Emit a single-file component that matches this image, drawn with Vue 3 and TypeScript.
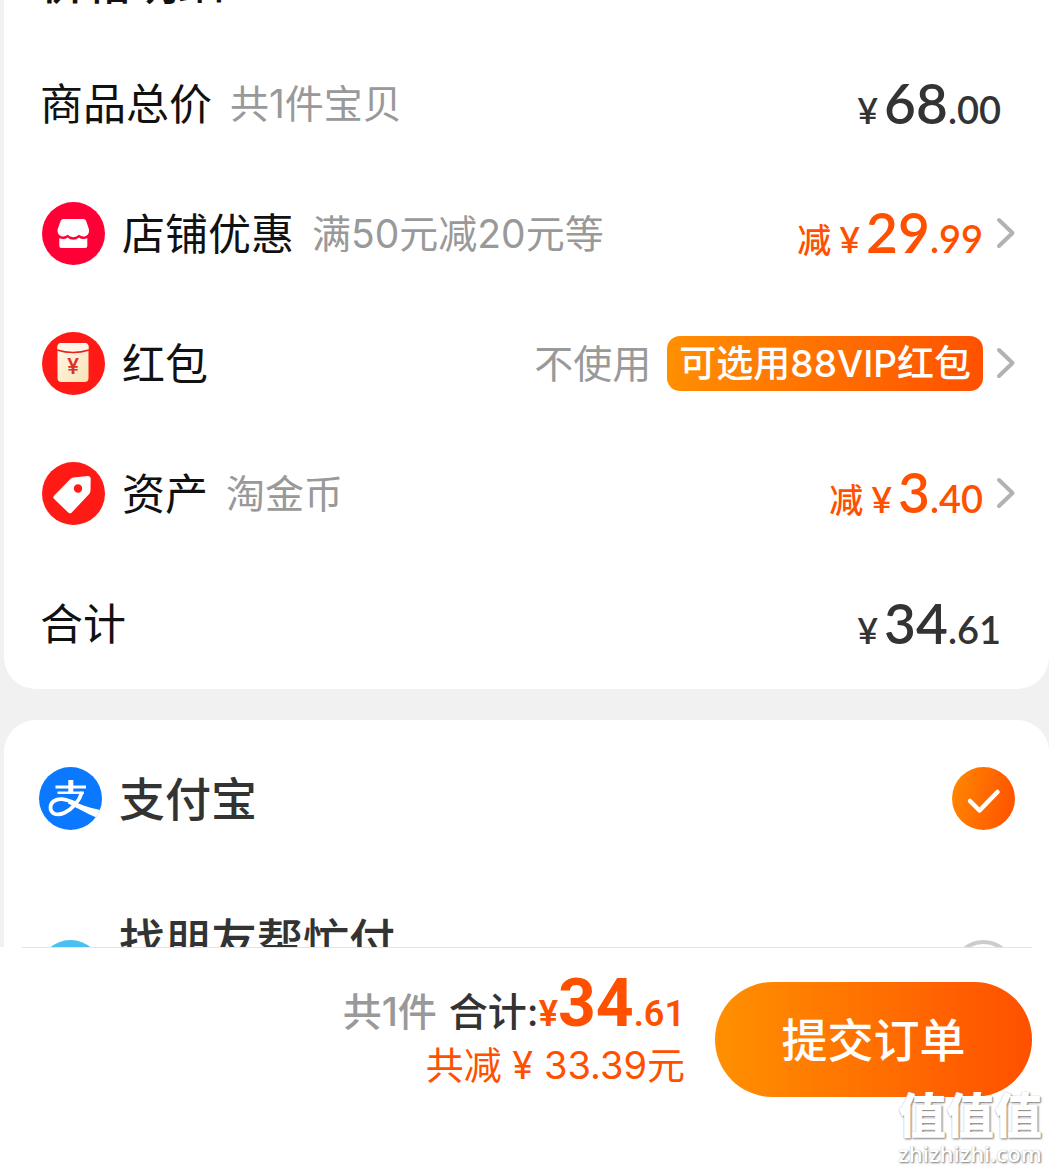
<script setup lang="ts">
import { ref } from 'vue'

interface PriceRow {
  id: string
  label: string
  icon?: 'shop' | 'packet' | 'tag'
  note?: string
  prefix?: string
  amount?: [string, string]
  hint?: string
  badge?: string
  link?: boolean
}

const rows: PriceRow[] = [
  { id: 'goods', label: '商品总价', note: '共1件宝贝', amount: ['68', '.00'] },
  { id: 'shop', label: '店铺优惠', icon: 'shop', note: '满50元减20元等', prefix: '减', amount: ['29', '.99'], link: true },
  { id: 'packet', label: '红包', icon: 'packet', hint: '不使用', badge: '可选用88VIP红包', link: true },
  { id: 'asset', label: '资产', icon: 'tag', note: '淘金币', prefix: '减', amount: ['3', '.40'], link: true },
  { id: 'total', label: '合计', amount: ['34', '.61'] },
]

const payment = ref('alipay')
</script>

<template>
  <div class="page">
    <main class="content">
      <section class="card prices">
        <h2 class="heading">价格明细</h2>
        <component
          :is="row.link ? 'button' : 'div'"
          v-for="row in rows"
          :key="row.id"
          class="row"
          :class="{ linked: row.link }"
          :type="row.link ? 'button' : undefined"
        >
          <svg v-if="row.icon === 'shop'" class="icon" viewBox="0 0 63 63" aria-hidden="true">
            <circle cx="31.5" cy="31.5" r="31.5" fill="#ff0036" />
            <path fill="#fff" d="M21.5 17H41.5Q43.3 17 44 18.6L47 27.5Q47.6 33.4 42.6 34.4Q39.3 34.9 37 32.8Q34.6 35.2 31.3 35.2Q28 35.2 25.6 32.8Q23.3 34.9 20 34.4Q15 33.4 15.6 27.5L18.8 18.6Q19.6 17 21.5 17Z" />
            <path fill="#fff" d="M17.3 36.3Q22.5 38.2 25.6 35.6Q28 37.8 31.3 37.8Q34.6 37.8 37 35.6Q40 38.2 45.3 36.3V44Q45.3 46 43.3 46H19.3Q17.3 46 17.3 44Z" />
          </svg>
          <svg v-else-if="row.icon === 'packet'" class="icon" viewBox="0 0 63 63" aria-hidden="true">
            <defs>
              <linearGradient id="paper" x1="0" y1="0" x2="1" y2="1">
                <stop offset="0" stop-color="#fff8ea" />
                <stop offset="1" stop-color="#f9e3b4" />
              </linearGradient>
            </defs>
            <circle cx="31.5" cy="31.5" r="31.5" fill="#ff1a16" />
            <rect x="15.5" y="11" width="31" height="39" rx="4" fill="url(#paper)" />
            <path d="M15.5 18Q31 22.5 46.5 18V15Q46.5 11 42.5 11H19.5Q15.5 11 15.5 15Z" fill="#fff6ea" />
            <path d="M15 18Q31 23 47 18" fill="none" stroke="#e8231c" stroke-width="1.5" />
            <text x="31" y="42" text-anchor="middle" class="yen">¥</text>
          </svg>
          <svg v-else-if="row.icon === 'tag'" class="icon" viewBox="0 0 63 63" aria-hidden="true">
            <circle cx="31.5" cy="31.5" r="31.5" fill="#ff1a16" />
            <path fill="#fff" fill-rule="evenodd" d="M31.5 15.5L46 14Q48.6 13.9 48.7 16.5L48.5 28.5Q48.5 30.5 47.2 31.9L29.8 50.5Q28 52.2 26.2 50.5L12.2 37Q10.5 35.2 12.2 33.4L28.2 17.2Q29.6 15.8 31.5 15.5ZM36 22.3A4.2 4.2 0 1 0 36 30.7A4.2 4.2 0 1 0 36 22.3Z" />
          </svg>
          <span class="label">{{ row.label }}</span>
          <span v-if="row.note" class="note">{{ row.note }}</span>
          <span class="value">
            <span v-if="row.amount" class="amount">
              <span v-if="row.prefix" class="prefix">{{ row.prefix }}</span>
              <span class="currency">¥</span>
              <span class="figure"><span class="whole">{{ row.amount[0] }}</span>{{ row.amount[1] }}</span>
            </span>
            <span v-if="row.hint" class="hint">{{ row.hint }}</span>
            <span v-if="row.badge" class="badge">{{ row.badge }}</span>
            <svg v-if="row.link" class="chevron" viewBox="0 0 20 32" aria-hidden="true">
              <path d="M3 3L16.5 16L3 29" fill="none" stroke="#b2b2b2" stroke-width="4" stroke-linecap="round" stroke-linejoin="round" />
            </svg>
          </span>
        </component>
      </section>

      <section class="card payments">
        <label class="pay">
          <svg class="icon" viewBox="0 0 63 63" aria-hidden="true">
            <defs>
              <clipPath id="disc"><circle cx="31.5" cy="31.5" r="31.5" /></clipPath>
            </defs>
            <circle cx="31.5" cy="31.5" r="31.5" fill="#0a78ff" />
            <g clip-path="url(#disc)" fill="none" stroke="#fff">
              <path d="M31.8 13V25" stroke-width="5" />
              <path d="M16.5 20H47" stroke-width="2.8" />
              <path d="M18.5 25.7H45" stroke-width="2.6" />
              <path d="M43 25C40.5 34 33.5 42 25.5 45.8C17.5 49.5 11.5 46.5 11.5 40.5C11.5 35 16.5 31.8 23 32.2C28 32.6 33 34.8 38 37" stroke-width="3.8" />
              <path d="M30 32.6C40 37 48 40.5 62 43.2L57.5 50.5C48 46.5 40 42 29 36.5Z" fill="#fff" stroke="none" />
            </g>
          </svg>
          <span class="pay-name">支付宝</span>
          <span class="pick">
            <input v-model="payment" class="radio" type="radio" name="payment" value="alipay" />
            <svg v-if="payment === 'alipay'" class="tick" viewBox="0 0 63 63" aria-hidden="true">
              <path d="M18 34L27.5 43.5L45.5 25" fill="none" stroke="#fff" stroke-width="4.5" stroke-linecap="round" stroke-linejoin="round" />
            </svg>
          </span>
        </label>
        <label class="pay friend">
          <svg class="icon" viewBox="0 0 63 63" aria-hidden="true">
            <circle cx="31.5" cy="31.5" r="31.5" fill="#4cc0f0" />
          </svg>
          <span class="pay-name">找朋友帮忙付</span>
          <span class="pick">
            <input v-model="payment" class="radio" type="radio" name="payment" value="friend" />
            <svg v-if="payment === 'friend'" class="tick" viewBox="0 0 63 63" aria-hidden="true">
              <path d="M18 34L27.5 43.5L45.5 25" fill="none" stroke="#fff" stroke-width="4.5" stroke-linecap="round" stroke-linejoin="round" />
            </svg>
          </span>
        </label>
      </section>
    </main>

    <footer class="footer">
      <div class="bar">
        <div class="summary">
          <div class="sum-line">
            <span class="count">共1件</span>
            <span class="sum-label">合计:</span>
            <span class="sum-price">¥<span class="sum-whole">34</span>.61</span>
          </div>
          <div class="saved">共减 ¥ 33.39元</div>
        </div>
        <button class="submit" type="button">提交订单</button>
      </div>
      <div class="watermark">
        <span class="mark">值值值</span>
        <span class="site">zhizhizhi.com</span>
      </div>
    </footer>
  </div>
</template>

<style>
body {
  margin: 0;
  background: #f1f1f1;
}
</style>

<style scoped>
.page {
  display: flex;
  flex-direction: column;
  height: 100vh;
  font-family: Inter, 'Noto Sans CJK SC', sans-serif;
  color: #111;
}

.content {
  flex: 1;
  min-height: 0;
  overflow: hidden;
  padding-left: 4px;
}

.card {
  background: #fff;
  border-radius: 32px;
}

.prices {
  padding-bottom: 1px;
  border-top-left-radius: 0;
  border-top-right-radius: 0;
}

.heading {
  margin: -42px 0 0;
  padding: 0 36px 32px;
  font-size: 46px;
  line-height: 48px;
  font-weight: 500;
}

.row {
  box-sizing: border-box;
  display: flex;
  align-items: center;
  width: 100%;
  height: 130px;
  padding: 0 48px 0 36px;
  border: 0;
  background: none;
  font: inherit;
  color: inherit;
  text-align: left;
}

.linked {
  padding: 0 33px 0 38px;
}

.icon {
  flex: none;
  width: 63px;
  height: 63px;
  margin-right: 17px;
}

.yen {
  font: 500 22px Roboto, sans-serif;
  fill: #d8342c;
}

.label {
  padding-top: 2px;
  font-size: 43px;
  line-height: 60px;
}

.note,
.hint {
  padding-top: 2px;
  font-size: 39px;
  line-height: 56px;
  color: #999;
}

.note {
  margin-left: 18px;
}

.value {
  display: flex;
  align-items: center;
  margin-left: auto;
}

.amount {
  display: flex;
  align-items: baseline;
  padding-top: 6px;
  font-family: Lato, 'Noto Sans CJK SC', sans-serif;
  font-size: 38px;
  line-height: 60px;
  font-weight: 600;
  color: #333;
}

.linked .amount {
  color: #ff5000;
}

.prefix {
  margin-right: 8px;
  font-size: 34px;
  font-weight: 500;
}

.currency {
  margin-right: 6px;
  font-size: 36px;
}

.whole {
  font-size: 55px;
}

.badge {
  margin-left: 16px;
  padding: 0 12px;
  border-radius: 13px;
  background: linear-gradient(100deg, #ff9000, #ff5000);
  font-size: 37px;
  line-height: 55px;
  font-weight: 500;
  color: #fff;
}

.chevron {
  width: 20px;
  height: 32px;
  margin-left: 13px;
}

.payments {
  margin-top: 31px;
}

.pay {
  box-sizing: border-box;
  display: flex;
  align-items: center;
  height: 157px;
  padding: 0 34px 0 35px;
}

.friend {
  align-items: flex-start;
  height: 189px;
  padding-top: 63px;
}

.pay-name {
  font-size: 46px;
  line-height: 64px;
  font-weight: 500;
  color: #333;
}

.friend .pay-name {
  margin-top: -32px;
}

.pick {
  position: relative;
  display: flex;
  margin-left: auto;
}

.radio {
  appearance: none;
  box-sizing: border-box;
  width: 63px;
  height: 63px;
  margin: 0;
  border: 4px solid #ccc;
  border-radius: 50%;
}

.radio:checked {
  border: 0;
  background: linear-gradient(100deg, #ff8800, #ff5000);
}

.tick {
  position: absolute;
  inset: 0;
  pointer-events: none;
}

.footer {
  position: relative;
  flex: none;
  background: #fff;
  padding: 0 17px 0 22px;
}

.bar {
  display: flex;
  align-items: flex-start;
  justify-content: flex-end;
  gap: 30px;
  padding: 24px 0 75px;
  border-top: 1px solid #e4e4e4;
}

.summary {
  display: flex;
  flex-direction: column;
  align-items: flex-end;
  gap: 3px;
}

.sum-line {
  display: flex;
  align-items: baseline;
  height: 64px;
  line-height: 64px;
  font-size: 39px;
  font-weight: 500;
}

.count {
  margin-right: 12px;
  color: #999;
}

.sum-label {
  color: #333;
}

.sum-price {
  font-family: Roboto, sans-serif;
  font-size: 36px;
  font-weight: 600;
  color: #ff5000;
}

.sum-whole {
  font-size: 66px;
  font-weight: 700;
}

.saved {
  font-size: 38px;
  line-height: 52px;
  color: #ff5000;
}

.submit {
  width: 317px;
  height: 115px;
  margin-top: 10px;
  padding: 0 0 6px;
  border: 0;
  border-radius: 58px;
  background: linear-gradient(90deg, #ff9000, #ff5000);
  font: inherit;
  font-size: 46px;
  font-weight: 500;
  color: #fff;
}

.watermark {
  position: absolute;
  right: 7px;
  bottom: 7px;
  display: flex;
  flex-direction: column;
  align-items: center;
  color: #fff;
  text-shadow: 1px 1px 2px #777, 0 0 1px #bbb;
}

.mark {
  font-size: 48px;
  line-height: 50px;
  font-weight: 900;
}

.site {
  font-family: 'Open Sans', sans-serif;
  font-size: 22px;
  line-height: 24px;
  font-weight: 600;
}
</style>
